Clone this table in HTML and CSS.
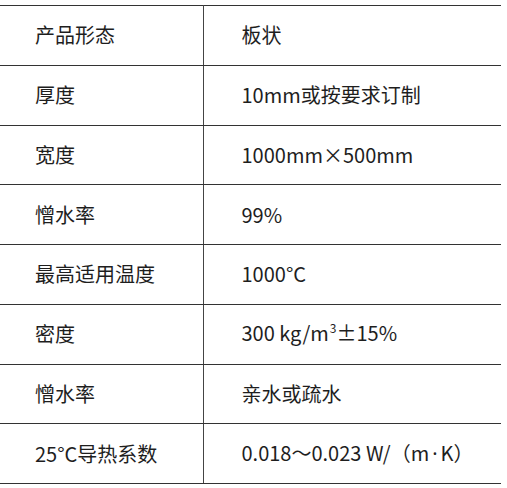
FILE: index.html
```html
<!DOCTYPE html>
<html lang="zh">
<head>
<meta charset="utf-8">
<link rel="stylesheet" href="styles.css">
</head>
<body>
<table class="spec">
  <tr><td class="k">产品形态</td><td class="v">板状</td></tr>
  <tr><td class="k">厚度</td><td class="v">10mm或按要求订制</td></tr>
  <tr><td class="k">宽度</td><td class="v">1000mm×500mm</td></tr>
  <tr><td class="k">憎水率</td><td class="v">99%</td></tr>
  <tr><td class="k">最高适用温度</td><td class="v">1000°C</td></tr>
  <tr><td class="k">密度</td><td class="v">300 kg/m<span class="sup">3</span>±15%</td></tr>
  <tr><td class="k">憎水率</td><td class="v">亲水或疏水</td></tr>
  <tr><td class="k">25°C导热系数</td><td class="v">0.018～0.023 W/（m<span class="dot">·</span>K）</td></tr>
</table>
</body>
</html>
```
FILE: styles.css
```css
html, body {
  margin: 0;
  padding: 0;
  background: #fff;
}
body {
  padding-top: 5px;
  font-family: "Noto Sans CJK SC", "Noto Sans", sans-serif;
  color: #1e1e1e;
}
.spec {
  border-collapse: collapse;
  width: 501px;
  table-layout: fixed;
}
.spec tr {
  height: 59.75px;
}
.spec td {
  border-top: 1px solid #333;
  border-bottom: 1px solid #333;
  font-size: 20px;
  line-height: 24px;
  padding: 0;
  vertical-align: middle;
}
.spec .k {
  width: 203px;
  padding-left: 35px;
  box-sizing: border-box;
  border-right: 1.5px solid #444;
}
.spec .v {
  padding-left: 38px;
}
.spec .sup {
  font-size: 12px;
  position: relative;
  top: -8px;
  margin-left: 1px;
}
.spec .dot {
  font-family: "Noto Sans", sans-serif;
  margin: 0 3px;
}
```
